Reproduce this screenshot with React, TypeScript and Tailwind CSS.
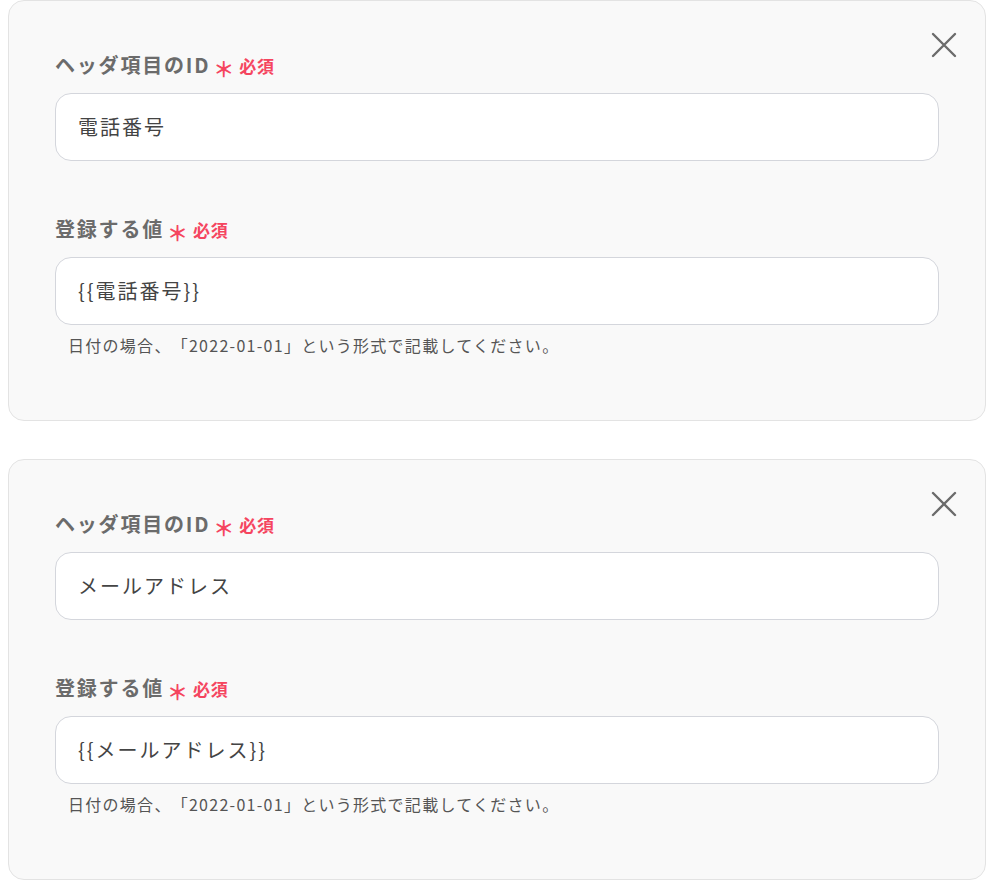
const font = { fontFamily: '"Noto Sans CJK JP", "Noto Sans", sans-serif' };

function Label({ text }: { text: string }) {
  return (
    <div className="flex items-center h-[28px] leading-none">
      <span className="text-[20px] font-bold text-[#6b6b6b] tracking-[0.09em]">{text}</span>
      <span className="ml-[3px] mt-[6px] text-[21px] font-bold text-[#f5455f] leading-none">＊</span>
      <span className="ml-[5px] text-[17px] font-bold text-[#f5455f] tracking-[0.04em]">必須</span>
    </div>
  );
}

function Field({ value }: { value: string }) {
  return (
    <div className="mt-[14px] h-[68px] rounded-[16px] border border-[#d4d6dc] bg-white flex items-center px-[22px]">
      <span className="text-[20px] text-[#444] tracking-[0.1em]">{value}</span>
    </div>
  );
}

function CloseIcon() {
  return (
    <svg width="26" height="26" viewBox="0 0 26 26" fill="none" stroke="currentColor" strokeWidth="2.4" strokeLinecap="round">
      <path d="M2 2L24 24M24 2L2 24" />
    </svg>
  );
}

function HeaderCard({ id, value }: { id: string; value: string }) {
  return (
    <div className="relative h-[421px] rounded-[16px] border border-[#e3e3e3] bg-[#f9f9f9] px-[46px] pt-[50px]">
      <button className="absolute top-[31px] right-[28px] text-[#6b6b6b]">
        <CloseIcon />
      </button>
      <Label text="ヘッダ項目のID" />
      <Field value={id} />
      <div className="mt-[54px]">
        <Label text="登録する値" />
        <Field value={value} />
      </div>
      <p className="mt-[9px] pl-[13px] text-[16px] text-[#555] tracking-[0.08em] leading-[22px] [text-spacing-trim:space-all]">
        日付の場合、「2022-01-01」という形式で記載してください。
      </p>
    </div>
  );
}

export default function App() {
  return (
    <div className="bg-white min-h-screen pl-[8px] pr-[20px]" style={font}>
      <div className="flex flex-col gap-[38px] w-[978px]">
        <HeaderCard id="電話番号" value="{{電話番号}}" />
        <HeaderCard id="メールアドレス" value="{{メールアドレス}}" />
      </div>
    </div>
  );
}
